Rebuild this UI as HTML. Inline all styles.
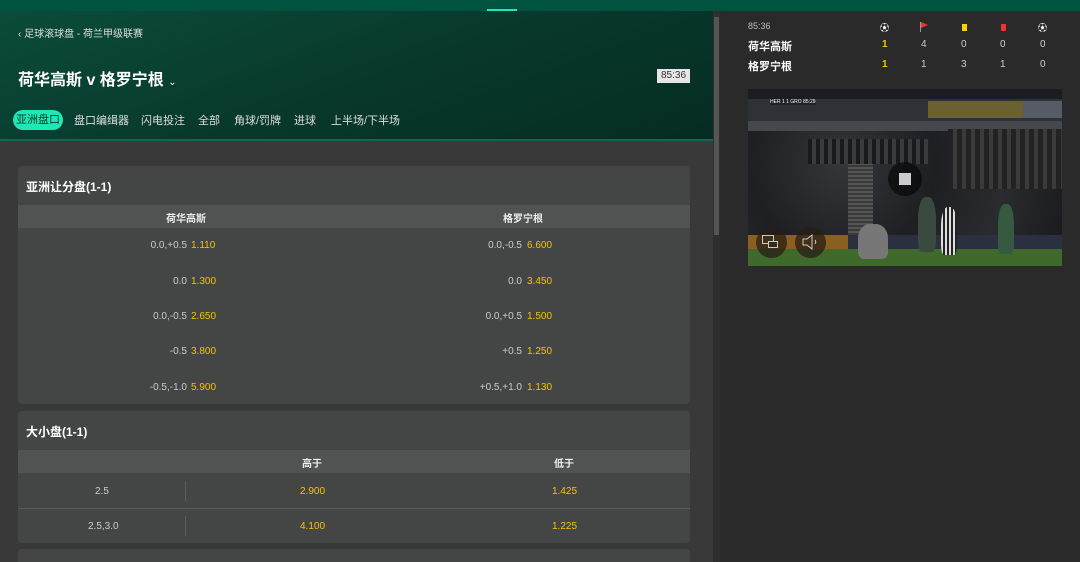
<!DOCTYPE html>
<html><head><meta charset="utf-8"><style>
*{margin:0;padding:0;box-sizing:border-box}
html,body{width:1080px;height:562px;overflow:hidden}
body{background:#2a2a2a;font-family:"Liberation Sans","Noto Sans CJK SC",sans-serif;position:relative;color:#fff}
.a{position:absolute}
.top{left:0;top:0;width:1080px;height:11px;background:#00533f}
.ind{left:487px;top:9px;width:30px;height:2px;background:#1de9b6}
.left{left:0;top:11px;width:713px;height:551px;background:#393939}
.hdr{left:0;top:11px;width:713px;height:130px;background:linear-gradient(160deg,#0b4c3a 0%,#08392c 50%,#062c23 100%);border-bottom:2px solid #0e6a4e}
.sb{left:713px;top:11px;width:7px;height:551px;background:#2e2e2e}
.th{left:714px;top:17px;width:5px;height:218px;background:#555}
.card{left:18px;width:672px;background:#434645;border-radius:4px}
.ct{font-size:12px;font-weight:bold;color:#fff}
.hrow{left:18px;width:672px;height:23px;background:#4f5351;font-size:10px;font-weight:bold;color:#eee}
.t{font-size:10px;color:#ccc;white-space:nowrap}
.o{font-size:10px;color:#f5c400;white-space:nowrap}
.tab{font-size:11px;color:#ddd;top:112px}
.r{text-align:right}
.p{position:absolute;border-radius:40% 40% 20% 20%}
</style></head><body>
<div class="a top"></div><div class="a ind"></div>
<div class="a left"></div>
<div class="a hdr"></div>
<div class="a" style="left:18px;top:25px;font-size:10px;color:#ddd">‹ 足球滚球盘 - 荷兰甲级联赛</div>
<div class="a" style="left:18px;top:66px;font-size:16px;font-weight:bold">荷华高斯 v 格罗宁根 <span style="font-size:10px;font-weight:normal">⌄</span></div>
<div class="a" style="left:657px;top:69px;width:33px;height:14px;background:#e6e6e6;color:#333;font-size:10px;text-align:center;line-height:14px">85:36</div>
<div class="a" style="left:13px;top:110px;width:50px;height:20px;border-radius:10px;background:#1de9b6;color:#0a3a2c;font-size:11px;line-height:20px;text-align:center">亚洲盘口</div>
<div class="a tab" style="left:74px">盘口编缉器</div>
<div class="a tab" style="left:141px">闪电投注</div>
<div class="a tab" style="left:198px">全部</div>
<div class="a tab" style="left:234px">角球/罚牌</div>
<div class="a tab" style="left:294px">进球</div>
<div class="a tab" style="left:331px">上半场/下半场</div>
<div class="a sb"></div><div class="a th"></div>

<div class="a card" style="top:166px;height:238px"></div>
<div class="a ct" style="left:26px;top:178px">亚洲让分盘(1-1)</div>
<div class="a hrow" style="top:205px"><span class="a" style="left:148px;top:5px">荷华高斯</span><span class="a" style="left:485px;top:5px">格罗宁根</span></div>
<div class="a t r" style="right:893px;top:240px">0.0,+0.5</div><div class="a o" style="left:191px;top:240px">1.110</div>
<div class="a t r" style="right:558px;top:240px">0.0,-0.5</div><div class="a o" style="left:527px;top:240px">6.600</div>
<div class="a t r" style="right:893px;top:276px">0.0</div><div class="a o" style="left:191px;top:276px">1.300</div>
<div class="a t r" style="right:558px;top:276px">0.0</div><div class="a o" style="left:527px;top:276px">3.450</div>
<div class="a t r" style="right:893px;top:311px">0.0,-0.5</div><div class="a o" style="left:191px;top:311px">2.650</div>
<div class="a t r" style="right:558px;top:311px">0.0,+0.5</div><div class="a o" style="left:527px;top:311px">1.500</div>
<div class="a t r" style="right:893px;top:346px">-0.5</div><div class="a o" style="left:191px;top:346px">3.800</div>
<div class="a t r" style="right:558px;top:346px">+0.5</div><div class="a o" style="left:527px;top:346px">1.250</div>
<div class="a t r" style="right:893px;top:382px">-0.5,-1.0</div><div class="a o" style="left:191px;top:382px">5.900</div>
<div class="a t r" style="right:558px;top:382px">+0.5,+1.0</div><div class="a o" style="left:527px;top:382px">1.130</div>

<div class="a card" style="top:411px;height:132px"></div>
<div class="a ct" style="left:26px;top:423px">大小盘(1-1)</div>
<div class="a hrow" style="top:450px"><span class="a" style="left:284px;top:5px">高于</span><span class="a" style="left:536px;top:5px">低于</span></div>
<div class="a" style="left:185px;top:481px;width:1px;height:20px;background:#5a5d5c"></div>
<div class="a" style="left:185px;top:516px;width:1px;height:20px;background:#5a5d5c"></div>
<div class="a" style="left:18px;top:508px;width:672px;height:1px;background:#555857"></div>
<div class="a t" style="left:95px;top:486px">2.5</div><div class="a o" style="left:300px;top:486px">2.900</div><div class="a o" style="left:552px;top:486px">1.425</div>
<div class="a t" style="left:88px;top:521px">2.5,3.0</div><div class="a o" style="left:300px;top:521px">4.100</div><div class="a o" style="left:552px;top:521px">1.225</div>
<div class="a card" style="top:549px;height:20px"></div>

<div class="a" style="left:748px;top:21px;font-size:9px;color:#bbb">85:36</div>
<div class="a" style="left:880px;top:21px;font-size:9px;color:#fff">⚽</div>
<div class="a" style="left:920px;top:22px;width:1px;height:10px;background:#999"></div>
<div class="a" style="left:921px;top:22px;width:0;height:0;border-left:7px solid #e33;border-top:3px solid transparent;border-bottom:3px solid transparent"></div>
<div class="a" style="left:962px;top:24px;width:5px;height:7px;background:#f5d400"></div>
<div class="a" style="left:1001px;top:24px;width:5px;height:7px;background:#e33"></div>
<div class="a" style="left:1038px;top:21px;font-size:9px;color:#fff">⚽</div>
<div class="a" style="left:748px;top:38px;font-size:11px;font-weight:bold">荷华高斯</div>
<div class="a" style="left:748px;top:58px;font-size:11px;font-weight:bold">格罗宁根</div>
<div class="a" style="left:882px;top:39px;font-size:10px;color:#f5c400;font-weight:bold">1</div>
<div class="a" style="left:921px;top:39px;font-size:10px;color:#ccc">4</div>
<div class="a" style="left:961px;top:39px;font-size:10px;color:#ccc">0</div>
<div class="a" style="left:1000px;top:39px;font-size:10px;color:#ccc">0</div>
<div class="a" style="left:1040px;top:39px;font-size:10px;color:#ccc">0</div>
<div class="a" style="left:882px;top:59px;font-size:10px;color:#f5c400;font-weight:bold">1</div>
<div class="a" style="left:921px;top:59px;font-size:10px;color:#ccc">1</div>
<div class="a" style="left:961px;top:59px;font-size:10px;color:#ccc">3</div>
<div class="a" style="left:1000px;top:59px;font-size:10px;color:#ccc">1</div>
<div class="a" style="left:1040px;top:59px;font-size:10px;color:#ccc">0</div>

<div class="a" style="left:748px;top:89px;width:314px;height:177px;background:#25272a;overflow:hidden">
<div class="a" style="left:0;top:0;width:314px;height:10px;background:#1a1d22"></div>
<div class="a" style="left:0;top:10px;width:314px;height:22px;background:#2e3236"></div>
<div class="a" style="left:180px;top:12px;width:95px;height:17px;background:#6a6030"></div>
<div class="a" style="left:275px;top:12px;width:39px;height:17px;background:#555c66"></div>
<div class="a" style="left:45px;top:33px;width:125px;height:48px;background:#7a7d84"></div>
<div class="a" style="left:0;top:32px;width:314px;height:10px;background:#45484d"></div>
<div class="a" style="left:0;top:42px;width:314px;height:110px;background:radial-gradient(circle at 30% 30%,#35363a 0,#1e1f22 40%,#2a2b2e 70%,#1a1b1d 100%)"></div>
<div class="a" style="left:60px;top:50px;width:120px;height:25px;background:repeating-linear-gradient(90deg,#1a1a1c 0 4px,#3a3b3f 4px 8px)"></div>
<div class="a" style="left:200px;top:40px;width:114px;height:60px;background:repeating-linear-gradient(90deg,#222 0 5px,#3a3a3a 5px 9px)"></div>
<div class="a" style="left:100px;top:75px;width:25px;height:75px;background:repeating-linear-gradient(0deg,#3a3a3a 0 2px,#555 2px 4px)"></div>
<div class="a" style="left:0;top:146px;width:314px;height:14px;background:#2a3040"></div>
<div class="a" style="left:0;top:146px;width:100px;height:14px;background:#8a6020"></div>
<div class="a" style="left:0;top:160px;width:314px;height:17px;background:#3f6a2c"></div>
<div class="p" style="left:170px;top:108px;width:18px;height:55px;background:#3a4a3e"></div>
<div class="p" style="left:193px;top:118px;width:16px;height:48px;background:repeating-linear-gradient(90deg,#ddd 0 2px,#222 2px 4px)"></div>
<div class="p" style="left:250px;top:115px;width:16px;height:50px;background:#355a40"></div>
<div class="p" style="left:110px;top:135px;width:30px;height:35px;background:#777"></div>
<div class="a" style="left:22px;top:10px;font-size:5px;color:#fff;background:#222">HER 1 1 GRO 85:29</div>
<div class="a" style="left:140px;top:73px;width:34px;height:34px;border-radius:50%;background:rgba(0,0,0,.55)"></div>
<div class="a" style="left:151px;top:84px;width:12px;height:12px;background:#ccc"></div>
<div class="a" style="left:8px;top:138px;width:31px;height:31px;border-radius:50%;background:rgba(40,30,20,.75)"></div>
<div class="a" style="left:47px;top:138px;width:31px;height:31px;border-radius:50%;background:rgba(40,30,20,.75)"></div>
<div class="a" style="left:14px;top:146px;width:12px;height:9px;border:1px solid #ccc"></div>
<div class="a" style="left:20px;top:152px;width:10px;height:7px;border:1px solid #ccc;background:#332a20"></div>
<svg class="a" style="left:53px;top:145px" width="20" height="16" viewBox="0 0 20 16"><path d="M2 5h4l5-4v14l-5-4H2z" fill="none" stroke="#ccc" stroke-width="1"/><path d="M14 6q1.5 2 0 4" fill="none" stroke="#ccc"/></svg>
</div>
</body></html>
